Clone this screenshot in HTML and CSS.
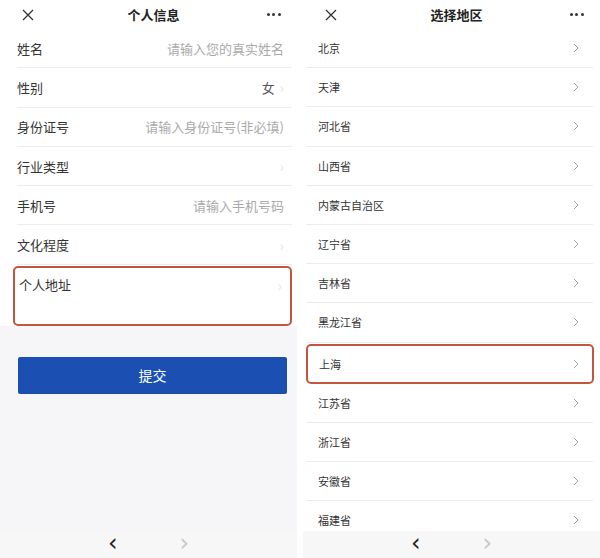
FILE: index.html
```html
<!DOCTYPE html>
<html lang="zh-CN">
<head>
<meta charset="UTF-8" />
<title>个人信息 / 选择地区</title>
<link rel="stylesheet" href="styles.css">
</head>
<body>

<!-- left phone: personal info form -->
<div class="phone form-phone">
  <div class="topbar">
    <svg class="close" viewBox="0 0 12 12"><path d="M1 1L11 11M11 1L1 11" /></svg>
    <div class="title">个人信息</div>
    <div class="more"><span></span><span></span><span></span></div>
  </div>
  <div class="form">
    <div class="field"><span class="label">姓名</span><span class="hint">请输入您的真实姓名</span></div>
    <div class="field"><span class="label">性别</span><span class="value">女</span><span class="arrow faint">›</span></div>
    <div class="field"><span class="label">身份证号</span><span class="hint">请输入身份证号(非必填)</span></div>
    <div class="field"><span class="label">行业类型</span><span class="arrow faint">›</span></div>
    <div class="field"><span class="label">手机号</span><span class="hint">请输入手机号码</span></div>
    <div class="field"><span class="label">文化程度</span><span class="arrow faint">›</span></div>
    <div class="field address marked"><span class="label">个人地址</span><span class="arrow faint">›</span></div>
  </div>
  <button class="submit">提交</button>
  <div class="navbar">
    <span class="nav back">‹</span>
    <span class="nav fwd">›</span>
  </div>
</div>

<!-- right phone: region picker -->
<div class="phone list-phone">
  <div class="topbar">
    <svg class="close" viewBox="0 0 12 12"><path d="M1 1L11 11M11 1L1 11" /></svg>
    <div class="title">选择地区</div>
    <div class="more"><span></span><span></span><span></span></div>
  </div>
  <div class="regions">
    <div class="region">北京<svg class="chev" viewBox="0 0 6 10"><path d="M1 1L5 5L1 9" /></svg></div>
    <div class="region">天津<svg class="chev" viewBox="0 0 6 10"><path d="M1 1L5 5L1 9" /></svg></div>
    <div class="region">河北省<svg class="chev" viewBox="0 0 6 10"><path d="M1 1L5 5L1 9" /></svg></div>
    <div class="region">山西省<svg class="chev" viewBox="0 0 6 10"><path d="M1 1L5 5L1 9" /></svg></div>
    <div class="region">内蒙古自治区<svg class="chev" viewBox="0 0 6 10"><path d="M1 1L5 5L1 9" /></svg></div>
    <div class="region">辽宁省<svg class="chev" viewBox="0 0 6 10"><path d="M1 1L5 5L1 9" /></svg></div>
    <div class="region">吉林省<svg class="chev" viewBox="0 0 6 10"><path d="M1 1L5 5L1 9" /></svg></div>
    <div class="region">黑龙江省<svg class="chev" viewBox="0 0 6 10"><path d="M1 1L5 5L1 9" /></svg></div>
    <div class="region marked">上海<svg class="chev" viewBox="0 0 6 10"><path d="M1 1L5 5L1 9" /></svg></div>
    <div class="region">江苏省<svg class="chev" viewBox="0 0 6 10"><path d="M1 1L5 5L1 9" /></svg></div>
    <div class="region">浙江省<svg class="chev" viewBox="0 0 6 10"><path d="M1 1L5 5L1 9" /></svg></div>
    <div class="region">安徽省<svg class="chev" viewBox="0 0 6 10"><path d="M1 1L5 5L1 9" /></svg></div>
    <div class="region">福建省<svg class="chev" viewBox="0 0 6 10"><path d="M1 1L5 5L1 9" /></svg></div>
  </div>
  <div class="navbar">
    <span class="nav back">‹</span>
    <span class="nav fwd">›</span>
  </div>
</div>

</body>
</html>
```

FILE: styles.css
```css
html, body {
  margin: 0;
  padding: 0;
}
body {
  width: 600px;
  height: 558px;
  display: flex;
  justify-content: space-between;
  background: #fff;
  font-family: "Noto Sans CJK SC", "Noto Sans", sans-serif;
  color: #333;
  overflow: hidden;
}
.phone {
  width: 297px;
  height: 558px;
  display: flex;
  flex-direction: column;
  overflow: hidden;
}
.form-phone {
  background: #f6f6f8;
}
.list-phone {
  width: 297px;
  background: #fff;
}

/* top bar */
.topbar {
  height: 29px;
  flex-shrink: 0;
  display: flex;
  align-items: center;
  justify-content: space-between;
  padding: 0 16px 0 22px;
  background: #fff;
}
.close {
  width: 12px;
  height: 12px;
  stroke: #333;
  stroke-width: 1.3;
  fill: none;
}
.title {
  font-size: 13px;
  font-weight: 700;
  color: #222;
  margin-left: 6px;
}
.more {
  display: flex;
  gap: 2.5px;
}
.more span {
  width: 3px;
  height: 3px;
  border-radius: 50%;
  background: #333;
}

/* form rows */
.form {
  background: #fff;
}
.field {
  height: 38.3px;
  display: flex;
  align-items: center;
  margin: 0 5px 0 17px;
  padding-right: 8px;
  border-bottom: 1px solid #ececec;
  font-size: 13px;
}
.field .label {
  flex: 1;
  color: #333;
}
.field .hint {
  color: #aaa;
}
.field .value {
  color: #555;
}
.arrow {
  font-size: 14px;
  margin-left: 5px;
  line-height: 1;
}
.arrow.faint {
  color: #e2e2e2;
}
.field.address {
  height: 60px;
  align-items: flex-start;
  padding-top: 7px;
  box-sizing: border-box;
  border-bottom: none;
  margin: 1px 5px 0 13px;
  padding-left: 4px;
}
.marked {
  border: 2px solid #c4553f !important;
  border-radius: 5px;
}
.field.address .arrow {
  margin-top: 3px;
}

.submit {
  margin: 31px 10px 0 18px;
  height: 37px;
  background: #1b4fb2;
  color: #fff;
  border: none;
  border-radius: 2px;
  font-family: inherit;
  font-size: 14px;
  padding: 0;
}

/* region list */
.regions {
  flex: 1;
  overflow: hidden;
}
.region {
  height: 38.2px;
  display: flex;
  align-items: center;
  justify-content: space-between;
  margin: 0 7px 0 3px;
  padding: 0 14px 0 12px;
  border-bottom: 1px solid #ececec;
  font-size: 11px;
  color: #333;
}
.region.marked {
  margin: 1px 6px 0 3px;
  padding: 0 13px 0 11px;
  height: 36px;
}
.chev {
  width: 6px;
  height: 10px;
  stroke: #999;
  stroke-width: 0.9;
  fill: none;
}

/* bottom browser bar */
.navbar {
  height: 27px;
  flex-shrink: 0;
  margin-top: auto;
  display: flex;
  justify-content: center;
  align-items: center;
  gap: 62px;
  background: #f7f7f7;
}
.nav {
  font-size: 24px;
  line-height: 1;
  margin-top: -4px;
  font-family: "DejaVu Sans", sans-serif;
}
.nav.back {
  color: #222;
}
.nav.fwd {
  color: #c8c8c8;
}
```
